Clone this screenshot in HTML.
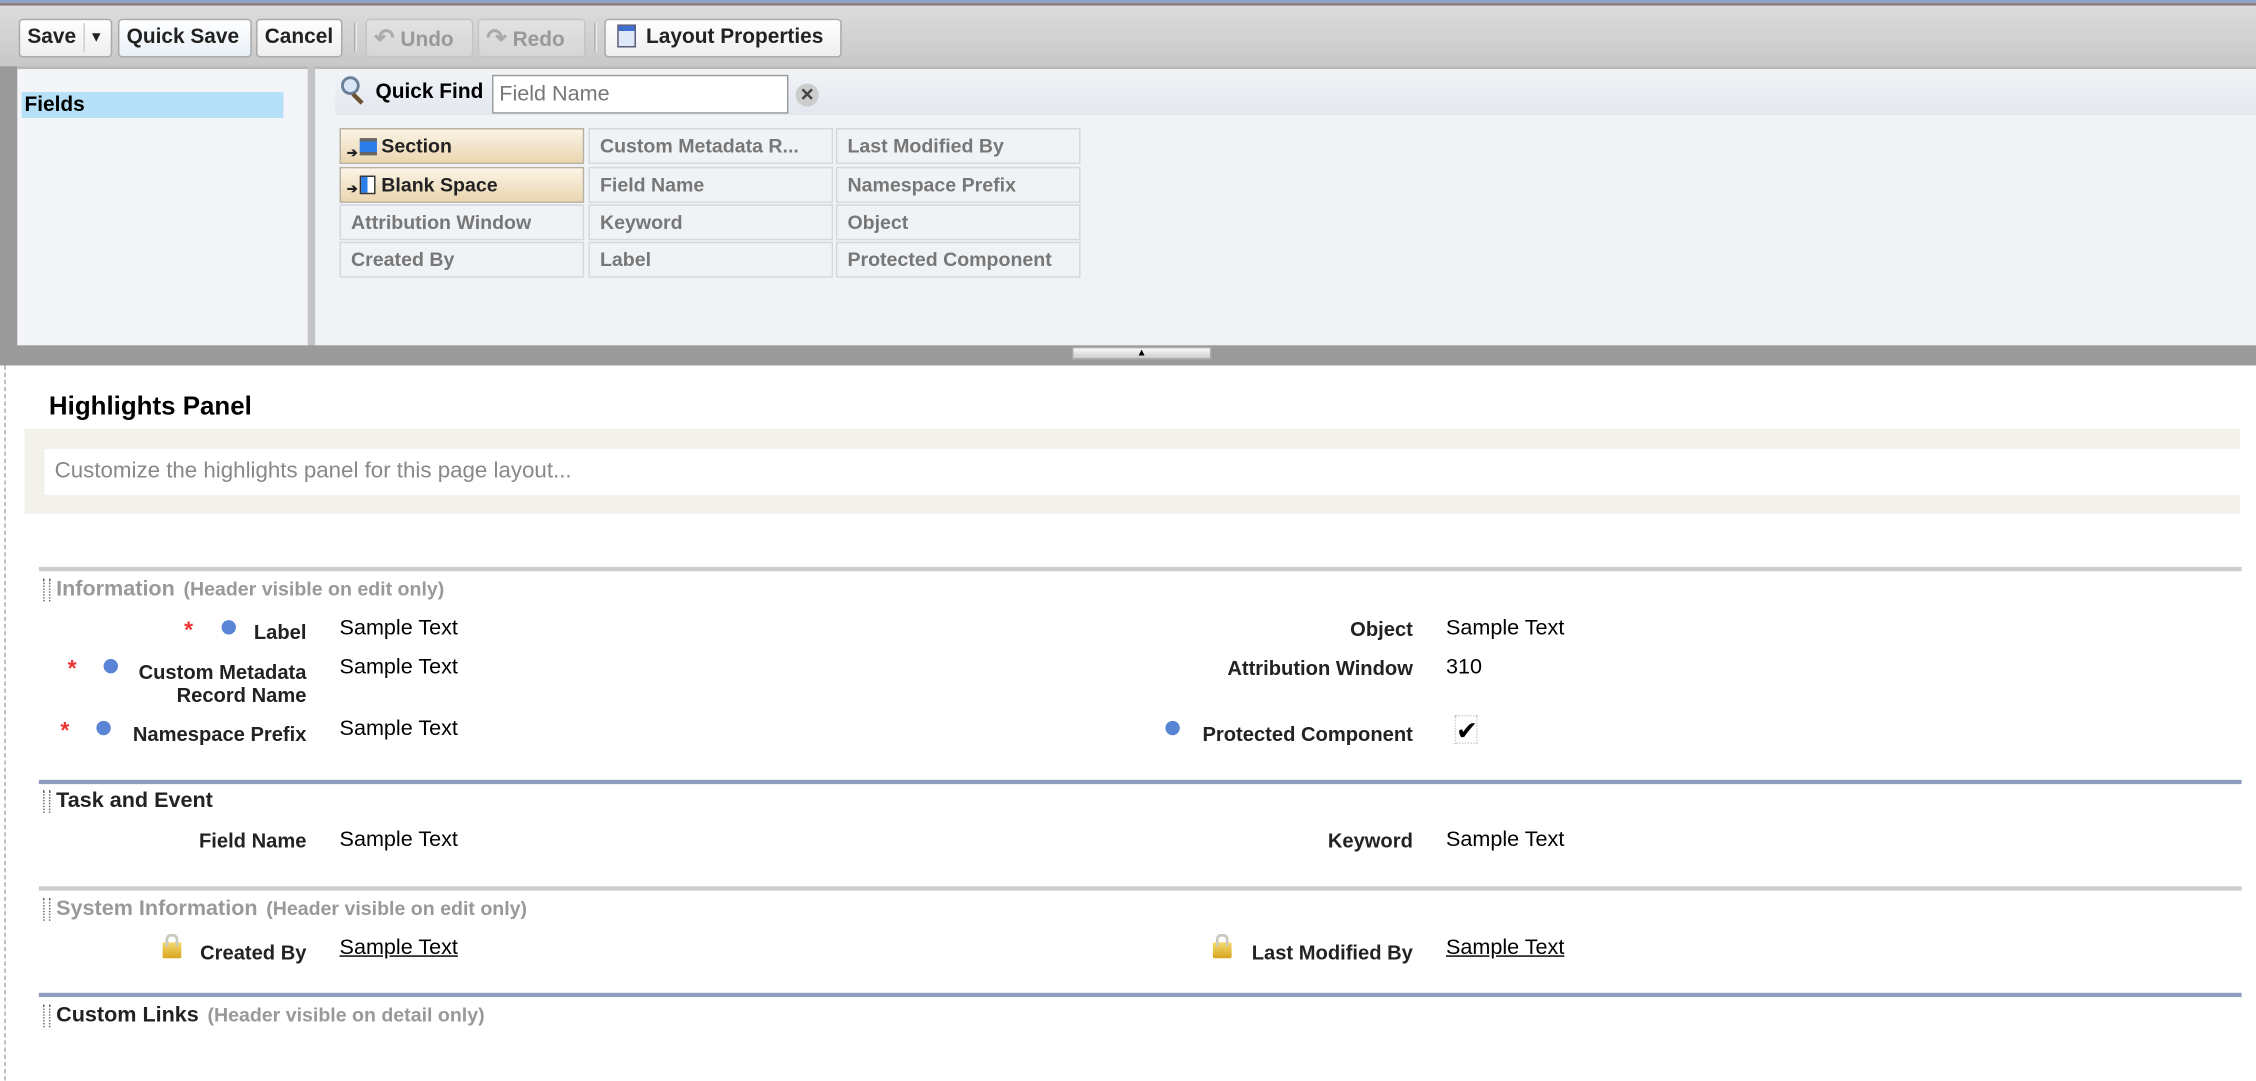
<!DOCTYPE html>
<html><head><meta charset="utf-8"><style>
*{box-sizing:border-box;margin:0;padding:0}
html,body{width:2256px;height:1080px;overflow:hidden;background:#fff;font-family:"Liberation Sans",Arial,sans-serif}
#w{position:absolute;left:0;top:0;width:1568px;height:751px;transform:scale(1.43878);transform-origin:0 0}
.a{position:absolute}
.btn{position:absolute;top:13px;height:27px;border:1px solid #a9a9a9;border-radius:3px;background:linear-gradient(#fff,#eee);font-weight:bold;font-size:14.5px;color:#222;line-height:25px;padding:0 5px;white-space:nowrap}
.dis{color:#999;background:linear-gradient(#e2e2e2,#d6d6d6);border-color:#c4c4c4}
.cell{position:absolute;width:170px;height:25px;border:1px solid #d3d8dc;background:#f0f3f6;font-size:13.6px;font-weight:bold;color:#777;line-height:23px;padding-left:7px;white-space:nowrap;overflow:hidden}
.hl{background:linear-gradient(#fbf4e6,#ead6b0);border-color:#b8b0a0;color:#222;padding-left:28px}
.sl{position:absolute;left:27px;right:10px;height:3px}
.sh{position:absolute;left:30px;font-size:15px;font-weight:bold;white-space:nowrap}
.sh:before{content:"";position:absolute;left:0;top:1px;width:3px;height:16px;border-left:1px dotted #666;border-right:1px dotted #666}
.sh span{padding-left:9px}
.sh i{font-style:normal;font-size:13.6px;color:#999;margin-left:6px}
.lb{position:absolute;font-size:14px;font-weight:bold;color:#222;text-align:right;line-height:16px}
.v{position:absolute;font-size:15px;color:#000;line-height:16px}
.st{position:absolute;color:#e33;font-size:16px;font-weight:bold}
.dot{position:absolute;width:10px;height:10px;border-radius:50%;background:#5a84d6}
.lock{position:absolute;width:13px;height:11px;background:linear-gradient(#f5d96b,#d8a624);border-radius:1px}
.lock:before{content:"";position:absolute;left:2px;top:-6px;width:5px;height:7px;border:2px solid #c9c9c0;border-bottom:none;border-radius:4px 4px 0 0}
</style></head><body><div id="w">
<div class="a" style="left:0;top:0;width:1568px;height:2px;background:#8ea3c8"></div>
<div class="a" style="left:0;top:2px;width:1568px;height:2px;background:#8a7e80"></div>
<div class="a" style="left:0;top:4px;width:1568px;height:42px;background:linear-gradient(#dcdcdc,#c8c8c8)"></div>
<div class="btn" style="left:13px;width:65px">Save <span style="display:inline-block;border-left:1px solid #ccc;height:20px;vertical-align:middle;margin:0 3px 0 1px"></span><span style="font-size:10px;vertical-align:1px">▼</span></div>
<div class="btn" style="left:82px;width:93px;background:linear-gradient(#fff,#e8f0f8)">Quick Save</div>
<div class="btn" style="left:178px;width:60px">Cancel</div>
<div class="a" style="left:246px;top:16px;width:2px;height:20px;background:#eee;border-left:1px solid #aaa"></div>
<div class="btn dis" style="left:254px;width:75px"><span style="font-size:17px;color:#aaa">↶</span> Undo</div>
<div class="btn dis" style="left:332px;width:75px"><span style="font-size:17px;color:#aaa">↷</span> Redo</div>
<div class="a" style="left:413px;top:16px;width:2px;height:20px;background:#eee;border-left:1px solid #aaa"></div>
<div class="btn" style="left:420px;width:165px;padding-left:8px"><span style="display:inline-block;width:13px;height:16px;background:linear-gradient(#3c6fd0 0 25%,#dfe8f6 25%);border:1px solid #557;vertical-align:-3px;margin-right:7px"></span>Layout Properties</div>
<div class="a" style="left:0;top:46px;width:1568px;height:208px;background:#9a9a9a"></div>
<div class="a" style="left:12px;top:46px;width:202px;height:194px;background:#f3f5f8;border-top:2px solid #b8b8b8"></div>
<div class="a" style="left:15px;top:64px;width:182px;height:18px;background:#b6e0f8;font-size:14.5px;font-weight:bold;padding-left:2px;line-height:18px">Fields</div>
<div class="a" style="left:214px;top:46px;width:5px;height:194px;background:#c4c4c4"></div>
<div class="a" style="left:219px;top:46px;width:1349px;height:194px;background:#f0f3f6;border-top:2px solid #b8b8b8"></div>
<div class="a" style="left:233px;top:50px;width:1335px;height:30px;background:linear-gradient(#f0f3f6,#e3e8ef)"></div>
<div class="a" style="left:237px;top:53px;width:13px;height:13px;border:2px solid #6a7f98;border-radius:50%;background:#d8e6f5"></div>
<div class="a" style="left:247px;top:64px;width:3px;height:9px;background:#6a5030;transform:rotate(-45deg)"></div>
<div class="a" style="left:261px;top:56px;font-size:14.5px;font-weight:bold">Quick Find</div>
<div class="a" style="left:342px;top:52px;width:206px;height:27px;border:1px solid #999;background:#fff;font-size:15px;color:#777;line-height:25px;padding-left:4px">Field Name</div>
<div class="a" style="left:553px;top:58px;width:16px;height:16px;border-radius:50%;background:#ccc;color:#444;font-size:12px;font-weight:bold;text-align:center;line-height:16px">✕</div>
<div class="cell hl" style="left:236px;top:89px">Section<span class="a" style="left:4px;top:5px;font-size:9px">➔</span><span class="a" style="left:13px;top:6px;width:12px;height:12px;background:linear-gradient(#666 0 20%,#2b7de9 20% 80%,#666 80%)"></span></div>
<div class="cell" style="left:409px;top:89px">Custom Metadata R...</div>
<div class="cell" style="left:581px;top:89px">Last Modified By</div>
<div class="cell hl" style="left:236px;top:116px">Blank Space<span class="a" style="left:4px;top:3px;font-size:9px">➔</span><span class="a" style="left:13px;top:5px;width:11px;height:13px;border:1px solid #333;background:linear-gradient(90deg,#2b7de9 0 50%,#fff 50%)"></span></div>
<div class="cell" style="left:409px;top:116px">Field Name</div>
<div class="cell" style="left:581px;top:116px">Namespace Prefix</div>
<div class="cell" style="left:236px;top:142px">Attribution Window</div>
<div class="cell" style="left:409px;top:142px">Keyword</div>
<div class="cell" style="left:581px;top:142px">Object</div>
<div class="cell" style="left:236px;top:168px">Created By</div>
<div class="cell" style="left:409px;top:168px">Label</div>
<div class="cell" style="left:581px;top:168px">Protected Component</div>
<div class="a" style="left:745px;top:241px;width:97px;height:9px;background:linear-gradient(#fafafa,#ccc);border:1px solid #aaa;font-size:7px;text-align:center;line-height:8px">▲</div>
<div class="a" style="left:3px;top:254px;width:0;height:497px;border-left:1px dashed #aaa"></div>
<div class="a" style="left:34px;top:272px;font-size:18px;font-weight:bold">Highlights Panel</div>
<div class="a" style="left:17px;top:298px;width:1540px;height:59px;background:#f2f2ea"></div>
<div class="a" style="left:31px;top:312px;width:1526px;height:32px;background:#fff;font-size:15.5px;color:#888;line-height:32px;padding-left:7px">Customize the highlights panel for this page layout...</div>

<div class="sl" style="top:394px;background:#ccc"></div>
<div class="sh" style="top:401px;color:#999"><span>Information</span><i>(Header visible on edit only)</i></div>
<div class="st" style="left:128px;top:430px">*</div><div class="dot" style="left:154px;top:431px"></div>
<div class="lb" style="left:150px;width:63px;top:431px">Label</div>
<div class="v" style="left:236px;top:429px">Sample Text</div>
<div class="st" style="left:47px;top:457px">*</div><div class="dot" style="left:72px;top:458px"></div>
<div class="lb" style="left:80px;width:133px;top:459px">Custom Metadata<br>Record Name</div>
<div class="v" style="left:236px;top:456px">Sample Text</div>
<div class="st" style="left:42px;top:500px">*</div><div class="dot" style="left:67px;top:501px"></div>
<div class="lb" style="left:80px;width:133px;top:502px">Namespace Prefix</div>
<div class="v" style="left:236px;top:499px">Sample Text</div>
<div class="lb" style="left:780px;width:202px;top:429px">Object</div>
<div class="v" style="left:1005px;top:429px">Sample Text</div>
<div class="lb" style="left:780px;width:202px;top:456px">Attribution Window</div>
<div class="v" style="left:1005px;top:456px">310</div>
<div class="dot" style="left:810px;top:501px"></div>
<div class="lb" style="left:780px;width:202px;top:502px">Protected Component</div>
<div class="a" style="left:1011px;top:497px;font-size:18px;width:16px;height:20px;border:1px dotted #ccc;line-height:20px">✔</div>

<div class="sl" style="top:542px;background:#8e9dc0"></div>
<div class="sh" style="top:548px;color:#222"><span>Task and Event</span></div>
<div class="lb" style="left:80px;width:133px;top:576px">Field Name</div>
<div class="v" style="left:236px;top:576px">Sample Text</div>
<div class="lb" style="left:780px;width:202px;top:576px">Keyword</div>
<div class="v" style="left:1005px;top:576px">Sample Text</div>

<div class="sl" style="top:616px;background:#ccc"></div>
<div class="sh" style="top:623px;color:#999"><span>System Information</span><i>(Header visible on edit only)</i></div>
<div class="lock" style="left:113px;top:655px"></div>
<div class="lb" style="left:80px;width:133px;top:654px">Created By</div>
<div class="v" style="left:236px;top:651px;text-decoration:underline">Sample Text</div>
<div class="lock" style="left:843px;top:655px"></div>
<div class="lb" style="left:780px;width:202px;top:654px">Last Modified By</div>
<div class="v" style="left:1005px;top:651px;text-decoration:underline">Sample Text</div>

<div class="sl" style="top:690px;background:#8e9dc0"></div>
<div class="sh" style="top:697px;color:#222"><span>Custom Links</span><i>(Header visible on detail only)</i></div>
</div></body></html>
